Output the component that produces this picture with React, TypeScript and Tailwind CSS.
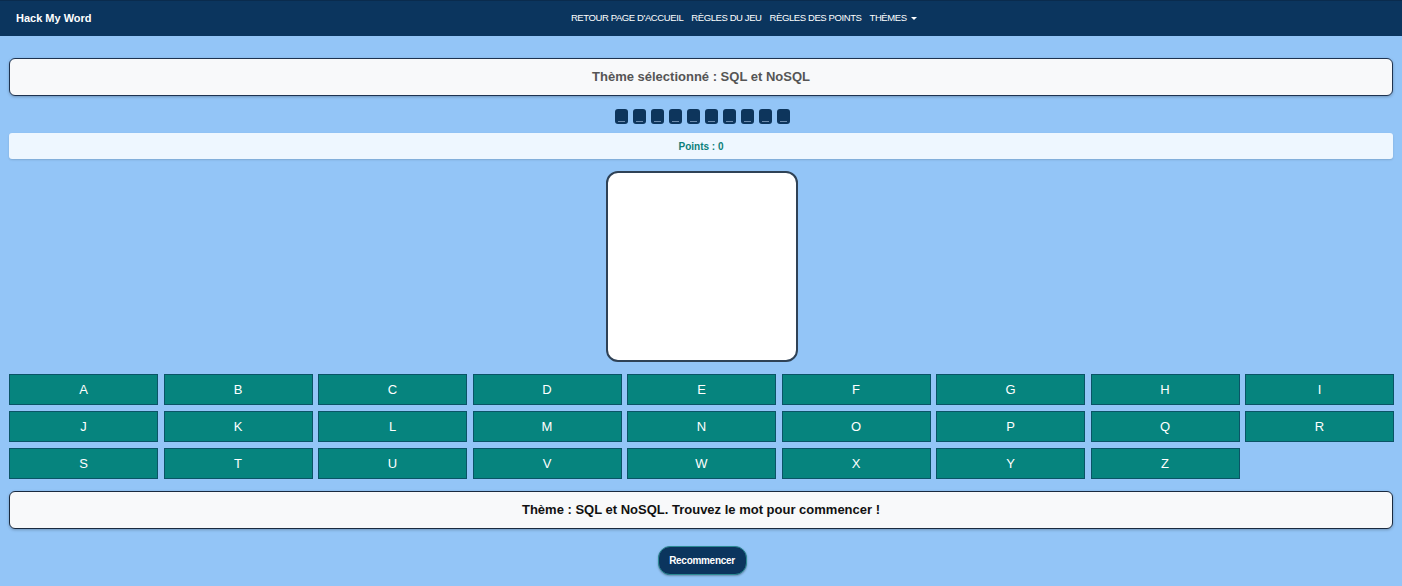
export default function App() {
  const rows = [
    ["A", "B", "C", "D", "E", "F", "G", "H", "I"],
    ["J", "K", "L", "M", "N", "O", "P", "Q", "R"],
    ["S", "T", "U", "V", "W", "X", "Y", "Z"],
  ]
  const slots = Array.from({ length: 10 })

  return (
    <div className="min-h-[586px] bg-[#93c5f7] font-['Liberation_Sans',Arial,sans-serif]">
      {/* Navbar */}
      <nav className="h-[36px] bg-[#0b355e] flex items-center px-4 border-t border-[#0a2b4d]">
        <span className="text-white text-[11px] font-bold">Hack My Word</span>
        <div className="flex-1 flex justify-center items-center gap-[8px] text-white text-[9.5px] tracking-[-0.4px] pl-[10px]">
          <span>RETOUR PAGE D'ACCUEIL</span>
          <span>RÈGLES DU JEU</span>
          <span>RÈGLES DES POINTS</span>
          <span className="flex items-center gap-[4px]">
            THÈMES
            <span className="inline-block w-0 h-0 border-l-[3px] border-r-[3px] border-t-[3px] border-l-transparent border-r-transparent border-t-white" />
          </span>
        </div>
      </nav>

      <div className="px-[9px] pt-[22px] flex flex-col">
        {/* Selected theme */}
        <div className="h-[38px] bg-[#f8f9fa] border border-[#1e3350] rounded-[6px] shadow-[0_1px_3px_rgba(0,0,0,0.25)] flex items-center justify-center">
          <span className="text-[#555] text-[13px] font-bold">Thème sélectionné : SQL et NoSQL</span>
        </div>

        {/* Word slots */}
        <div className="flex justify-center gap-[5px] mt-[13px] ml-[2px]">
          {slots.map((_, i) => (
            <div
              key={i}
              className="w-[13px] h-[15px] bg-[#0d355c] rounded-[3px] flex items-end justify-center pb-[2px]"
            >
              <span className="block w-[7px] h-[1px] bg-[#6d8cae]" />
            </div>
          ))}
        </div>

        {/* Points */}
        <div className="h-[26px] mt-[9px] bg-[#eef7ff] rounded-[3px] shadow-[0_1px_2px_rgba(0,0,0,0.15)] flex items-center justify-center">
          <span className="text-[#0b7f7a] text-[10px] font-bold">Points : 0</span>
        </div>

        {/* Hangman canvas */}
        <div className="flex justify-center mt-[12px] ml-[2px]">
          <div className="w-[192px] h-[191px] bg-white border-2 border-[#2f4256] rounded-[12px]" />
        </div>

        {/* Keyboard */}
        <div className="grid grid-cols-9 gap-x-[5.5px] gap-y-[6px] mt-[12px] mr-[-1px]">
          {rows.flat().map((l) => (
            <button
              key={l}
              className="h-[31px] bg-[#06847e] border border-[#0a5466] text-white text-[13px] flex items-center justify-center"
            >
              {l}
            </button>
          ))}
        </div>

        {/* Message */}
        <div className="h-[38px] mt-[12px] bg-[#f8f9fa] border border-[#1a2a3f] rounded-[6px] shadow-[0_1px_3px_rgba(0,0,0,0.25)] flex items-center justify-center">
          <span className="text-[#111] text-[13px] font-bold">Thème : SQL et NoSQL. Trouvez le mot pour commencer !</span>
        </div>

        {/* Restart */}
        <div className="flex justify-center mt-[17px]">
          <button className="w-[89px] h-[29px] bg-[#0b355e] border border-[#2a8a93] rounded-[12px] text-white text-[10px] font-bold tracking-[-0.3px] shadow-[0_1px_2px_rgba(0,0,0,0.3)] ml-[2px]">
            Recommencer
          </button>
        </div>
      </div>
    </div>
  )
}
